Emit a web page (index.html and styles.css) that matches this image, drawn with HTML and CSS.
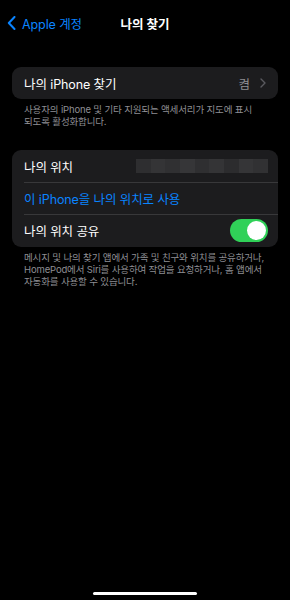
FILE: index.html
```html
<!DOCTYPE html>
<html lang="ko">
<head>
<meta charset="utf-8">
<link rel="stylesheet" href="styles.css">
</head>
<body>
<div class="screen">
  <header class="nav">
    <a class="back">
      <svg class="back-chev" width="9" height="14" viewBox="0 0 9 14"><path d="M7.5 1 L1.8 7 L7.5 13" fill="none" stroke="#0a84ff" stroke-width="2" stroke-linecap="round" stroke-linejoin="round"/></svg>
      <span>Apple 계정</span>
    </a>
    <div class="title">나의 찾기</div>
  </header>

  <section class="group first">
    <div class="card">
      <div class="row">
        <span class="label">나의 iPhone 찾기</span>
        <span class="value">켬
          <svg class="chev" width="6" height="10" viewBox="0 0 6 10"><path d="M1 1 L5 5 L1 9" fill="none" stroke="#5a5a5f" stroke-width="1.4" stroke-linecap="round" stroke-linejoin="round"/></svg>
        </span>
      </div>
    </div>
    <p class="foot">사용자의 iPhone 및 기타 지원되는 액세서리가 지도에 표시 되도록 활성화합니다.</p>
  </section>

  <section class="group second">
    <div class="card">
      <div class="row">
        <span class="label">나의 위치</span>
        <span class="blur">
          <i style="background:#2e2e30"></i><i style="background:#343436"></i><i style="background:#303032"></i><i style="background:#363638"></i><i style="background:#2f2f31"></i><i style="background:#343436"></i><i style="background:#2c2c2e"></i><i style="background:#353537"></i><i style="background:#313133"></i>
        </span>
      </div>
      <div class="row sep">
        <span class="label link">이 iPhone을 나의 위치로 사용</span>
      </div>
      <div class="row sep last">
        <span class="label">나의 위치 공유</span>
        <span class="toggle"><span class="knob"></span></span>
      </div>
    </div>
    <p class="foot">메시지 및 나의 찾기 앱에서 가족 및 친구와 위치를 공유하거나,<br>HomePod에서 Siri를 사용하여 작업을 요청하거나, 홈 앱에서<br>자동화를 사용할 수 있습니다.</p>
  </section>

  <div class="home-indicator"></div>
</div>
</body>
</html>
```

FILE: styles.css
```css
html, body {
  margin: 0;
  padding: 0;
  background: #000;
}
body {
  font-family: Inter, "Noto Sans CJK KR", sans-serif;
  color: #fff;
  -webkit-font-smoothing: antialiased;
}
.screen {
  width: 290px;
  height: 600px;
  position: relative;
  display: flex;
  flex-direction: column;
}
.nav {
  height: 46px;
  display: flex;
  align-items: center;
  position: relative;
}
.back {
  display: flex;
  align-items: center;
  gap: 6px;
  padding-left: 7px;
  color: #0a84ff;
  font-size: 12.5px;
  letter-spacing: -0.1px;
}
.back-chev { display: block; }
.title {
  position: absolute;
  left: 0;
  right: 0;
  text-align: center;
  font-size: 12.5px;
  font-weight: 600;
  pointer-events: none;
}
.group {
  margin: 0 12px;
}
.group.first { margin-top: 21px; }
.group.second { margin-top: 22px; }
.card {
  background: #1c1c1e;
  border-radius: 9px;
  overflow: hidden;
}
.row {
  height: 32px;
  display: flex;
  align-items: center;
  justify-content: space-between;
  padding: 0 10px 0 12px;
  position: relative;
}
.row.last { height: 33px; }
.row.sep::before {
  content: "";
  position: absolute;
  top: 0;
  left: 12px;
  right: 0;
  height: 0.5px;
  background: #38383a;
}
.label {
  font-size: 12.5px;
  letter-spacing: -0.1px;
}
.label.link { color: #0a84ff; }
.value {
  display: flex;
  align-items: center;
  gap: 10px;
  color: #8e8e93;
  font-size: 12.5px;
  padding-right: 2px;
}
.chev { display: block; }
.blur {
  display: flex;
  width: 132px;
  height: 14px;
}
.blur i {
  flex: 1;
  display: block;
  height: 100%;
}
.toggle {
  width: 38px;
  height: 23px;
  border-radius: 12px;
  background: #30d158;
  display: flex;
  align-items: center;
  justify-content: flex-end;
  padding: 0 2px;
  box-sizing: border-box;
}
.knob {
  width: 19px;
  height: 19px;
  border-radius: 50%;
  background: #fff;
}
.foot {
  margin: 5px 0 0;
  padding: 0 2px 0 12px;
  font-size: 9.5px;
  line-height: 12px;
  color: #8e8e93;
  word-break: keep-all;
  letter-spacing: -0.15px;
  white-space: nowrap;
}
.group.first .foot { white-space: normal; }
.home-indicator {
  position: absolute;
  left: 93px;
  width: 104px;
  bottom: 5px;
  height: 3px;
  border-radius: 2px;
  background: #fff;
}
```
